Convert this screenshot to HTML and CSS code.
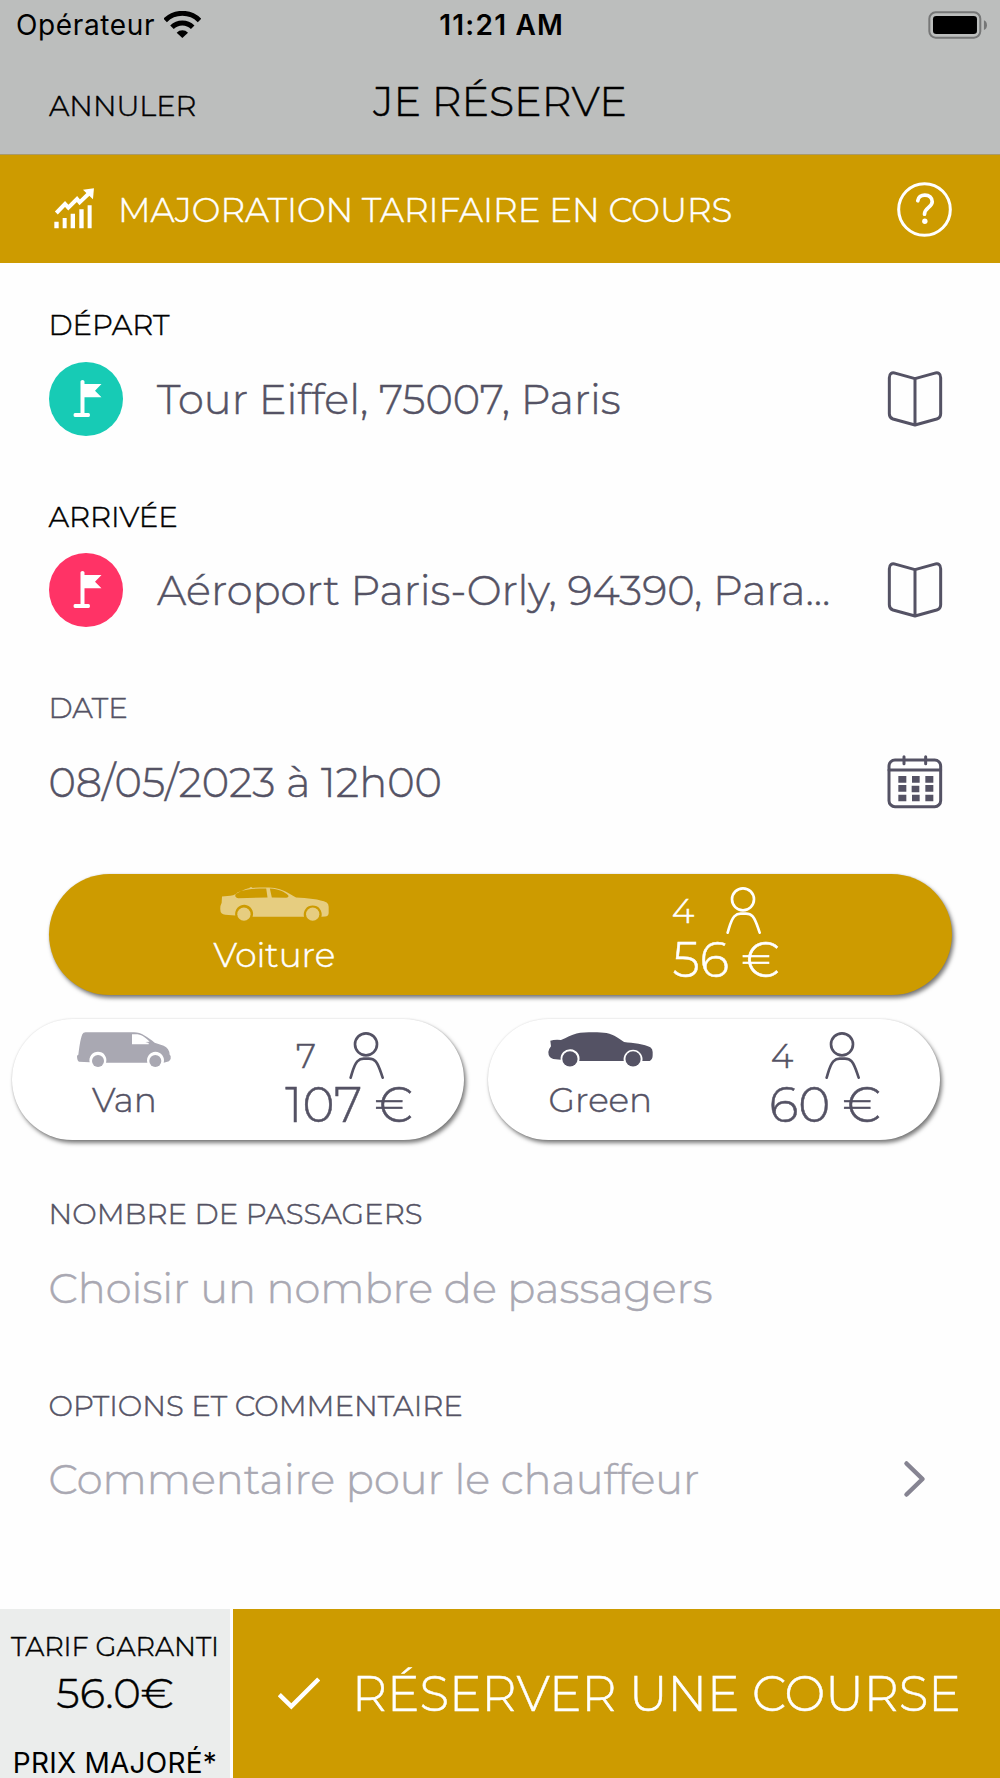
FILE: index.html
```html
<!DOCTYPE html>
<html lang="fr">
<head>
<meta charset="utf-8">
<title>Je réserve</title>
<link rel="stylesheet" href="styles.css">
</head>
<body>
<svg class="defs" aria-hidden="true">
  <symbol id="person" viewBox="678 651 105 141">
    <g fill="none" stroke="currentColor" stroke-width="8" stroke-linecap="round">
      <circle cx="729" cy="688" r="33"/>
      <path d="M683 788C690 765 693 749 703 739Q711 731 722 731H738Q750 731 758 739C768 751 772 768 779 788"/>
    </g>
  </symbol>
  <symbol id="flag" viewBox="0 0 74 74">
    <path fill="#fff" d="M31.5 19.5Q31.5 18 33.5 18T35.500 19.500V22H52.500L46 28.700L52.500 35.300H35.500V51H39.500Q41 51 41 53T39.500 55H26Q24.500 55 24.500 53T26 51H31.500Z"/>
  </symbol>
  <symbol id="map" viewBox="1160 242 168 168">
    <path fill="none" stroke="currentColor" stroke-width="9" stroke-linejoin="round" d="M1244 265L1187 249Q1167 243 1167 262V370Q1167 382 1178 386L1244 404L1309 386Q1321 382 1321 370V262Q1321 243 1301 249L1244 265V404"/>
  </symbol>
</svg>

<main class="screen">
  <header class="header">
    <div class="status">
      <div class="carrier">
        <span>Opérateur</span>
        <svg class="wifi" viewBox="494 30 110 81">
          <g fill="none" stroke="#000" stroke-width="15">
            <path d="M497.400 58.400A73 73 0 0 1 600.600 58.400"/>
            <path d="M517.900 78.900A44 44 0 0 1 580.100 78.900"/>
          </g>
          <path d="M549 111L532 95A24 24 0 0 1 566 95Z"/>
        </svg>
      </div>
      <div class="clock">11:21 AM</div>
      <svg class="battery" viewBox="1284 30 178 84">
        <rect x="1288" y="34" width="153" height="76" rx="19" fill="none" stroke="#767777" stroke-width="6"/>
        <rect x="1299" y="45" width="132" height="54" rx="10"/>
        <path fill="#767777" d="M1452 58Q1461 62 1461 72.500T1452 87Z"/>
      </svg>
    </div>
    <nav class="nav">
      <a class="cancel">ANNULER</a>
      <h1 class="title">JE RÉSERVE</h1>
    </nav>
  </header>

  <section class="banner">
    <svg class="growth" viewBox="163 563 121 122" fill="#fff">
      <path d="M164 664h13v20h-13zM189 653h12v31h-12zM213 640h13v44h-13zM239 627h13v57h-13zM264 615h12v69h-12z"/>
      <path d="M170 638L196 611L206 622L232 596L240 606L270 577" fill="none" stroke="#fff" stroke-width="12"/>
      <path d="M250 568L283 564L280 597Z"/>
    </svg>
    <span class="banner-text">MAJORATION TARIFAIRE EN COURS</span>
    <svg class="help" viewBox="1192 545 164 164" fill="none" stroke="#fff">
      <circle cx="1274" cy="627" r="77" stroke-width="9"/>
      <path stroke-width="11" stroke-linecap="round" d="M1254 601C1255 590 1264 584 1275 584C1288 584 1297 592 1297 604C1297 620 1274 622 1274 641"/>
      <circle cx="1275" cy="662" r="8" fill="#fff" stroke="none"/>
    </svg>
  </section>

  <section class="field">
    <div class="label dark">DÉPART</div>
    <div class="row">
      <svg class="pin pickup"><use href="#flag"/></svg>
      <span class="value">Tour Eiffel, 75007, Paris</span>
      <svg class="action"><use href="#map"/></svg>
    </div>
  </section>
  <section class="field">
    <div class="label dark">ARRIVÉE</div>
    <div class="row">
      <svg class="pin dropoff"><use href="#flag"/></svg>
      <span class="value">Aéroport Paris-Orly, 94390, Para...</span>
      <svg class="action"><use href="#map"/></svg>
    </div>
  </section>
  <section class="field">
    <div class="label">DATE</div>
    <div class="row">
      <span class="value">08/05/2023 à 12h00</span>
      <svg class="action" viewBox="1160 250 168 168">
        <g fill="none" stroke="currentColor" stroke-width="9" stroke-linecap="round">
          <rect x="1166" y="268" width="155" height="140" rx="18"/>
          <path d="M1166 298H1321M1211 258V279M1276 258V279"/>
        </g>
        <path fill="currentColor" d="M1194 316h24v20h-24zM1235 316h23v20h-23zM1275 316h24v20h-24zM1194 343h24v20h-24zM1234 345h23v20h-23zM1275 343h24v20h-24zM1194 372h24v20h-24zM1235 372h23v20h-23zM1275 372h24v20h-24z"/>
      </svg>
    </div>
  </section>

  <section class="vehicles">
    <article class="pill selected">
      <div class="kind">
        <svg class="car" viewBox="29 51 328 101">
          <path fill-rule="evenodd" d="M35 79L60 77C72 75 82 68 92 63C100 58 110 55 119 53L118 51H125L127 53C160 51 188 51 200 55C225 61 240 72 258 82C290 84 330 87 350 97Q356 101 356 110V126Q357 139 345 139L334 140A27 27 0 1 0 282 140H127A27 27 0 1 0 75 136L45 134Q30 132 30 118Q29 108 34 98ZM76 80Q72 72 83 66C110 55 140 55 168 55L172 82L84 84Q78 84 76 80ZM179 55C205 56 225 66 234 75Q238 82 228 83L185 82Z"/>
          <circle cx="101" cy="132" r="20"/><circle cx="308" cy="132" r="20"/>
        </svg>
        <span class="name">Voiture</span>
      </div>
      <div class="offer">
        <div class="seats"><span class="count">4</span><svg class="person"><use href="#person"/></svg></div>
        <span class="price">56 €</span>
      </div>
    </article>
    <div class="pair">
      <article class="pill">
        <div class="kind">
          <svg class="van" viewBox="24 36 282 105">
            <path fill-rule="evenodd" d="M52 37H195C217 37 236 52 257 68L284 77Q301 84 302 104L305 108V117L300 124L284 128A25.500 25.500 0 1 0 235 128H111A25.500 25.500 0 1 0 62 127L30 125Q24 122 24 107L28 104C31 85 33 60 40 43Q43 36 52 37ZM189 43H206C222 46 230 54 242 65L229 66L239 69V73H189Z"/>
            <circle cx="87" cy="123" r="18"/><circle cx="259" cy="123" r="18"/>
          </svg>
          <span class="name">Van</span>
        </div>
        <div class="offer">
          <div class="seats"><span class="count">7</span><svg class="person"><use href="#person"/></svg></div>
          <span class="price">107 €</span>
        </div>
      </article>
      <article class="pill">
        <div class="kind">
          <svg class="green" viewBox="144 96 316 103">
            <path d="M151 121Q165 117 183 119C200 111 215 103 230 99C255 95 300 95 320 98C345 104 358 115 373 125C400 128 435 131 452 141Q459 146 459 155V165Q459 178 450 182H428A28.500 28.500 0 1 0 372 182H238A28.500 28.500 0 1 0 182 178L160 176Q145 172 145 155Q147 145 153 138Z"/>
            <circle cx="210" cy="176" r="23"/><circle cx="400" cy="176" r="23"/>
          </svg>
          <span class="name">Green</span>
        </div>
        <div class="offer">
          <div class="seats"><span class="count">4</span><svg class="person"><use href="#person"/></svg></div>
          <span class="price">60 €</span>
        </div>
      </article>
    </div>
  </section>

  <section class="field">
    <div class="label">NOMBRE DE PASSAGERS</div>
    <div class="row"><span class="value hint">Choisir un nombre de passagers</span></div>
  </section>
  <section class="field">
    <div class="label">OPTIONS ET COMMENTAIRE</div>
    <div class="row">
      <span class="value hint">Commentaire pour le chauffeur</span>
      <svg class="action chevron" viewBox="0 0 56 56"><path fill="none" stroke="currentColor" stroke-width="4.500" stroke-linecap="round" stroke-linejoin="round" d="M19.500 12.500L35.500 28L19.500 43.500"/></svg>
    </div>
  </section>

  <footer class="footer">
    <div class="fare">
      <span class="fare-label">TARIF GARANTI</span>
      <span class="fare-price">56.0€</span>
      <span class="fare-note">PRIX MAJORÉ*</span>
    </div>
    <button class="book">
      <svg class="check" viewBox="835 923 126 98"><path fill="none" stroke="#fff" stroke-width="13" d="M839 976L875 1011L957 929"/></svg>
      <span class="book-text">RÉSERVER UNE COURSE</span>
    </button>
  </footer>
</main>
</body>
</html>
```
FILE: styles.css
```css
* { box-sizing: border-box; }

body {
  margin: 0;
  background: #fefefe;
  color: #545264;
  font-family: Montserrat, Inter, sans-serif;
  font-weight: 300;
  -webkit-text-stroke: 0.5px currentColor;
}

svg { flex: none; display: block; }
.defs { display: none; }

.screen {
  width: 1000px;
  height: 1778px;
  display: flex;
  flex-direction: column;
  overflow: hidden;
}

/* Header */
.header { height: 155px; background: #bcbebd; color: #000; border-bottom: 1px solid #a89a6c; }

.status {
  height: 51px;
  display: grid;
  grid-template-columns: 1fr auto 1fr;
  align-items: center;
  padding: 0 12.7px 0 16px;
  font: 400 28px/51px Inter, sans-serif;
  -webkit-text-stroke: 0;
}
.carrier { display: flex; align-items: center; gap: 9px; letter-spacing: 0.64px; }
.wifi { width: 36.700px; height: 27px; margin-top: -3px; }
.clock { font-weight: 600; letter-spacing: 1.2px; }
.battery { width: 59.300px; height: 28px; justify-self: end; margin-top: -2px; }

.nav {
  height: 103px;
  display: grid;
  grid-template-columns: 1fr auto 1fr;
  align-items: center;
  padding: 0 49px;
}
.cancel { font-size: 28.900px; line-height: 34px; padding-top: 6px; }
.title { margin: 0; font-size: 41.250px; font-weight: 300; line-height: 50px; padding-bottom: 3px; }

/* Surcharge banner */
.banner {
  height: 108px;
  display: flex;
  align-items: center;
  padding: 0 48px 0 54px;
  background: #cd9b00;
  color: #fff;
}
.growth { width: 40.300px; height: 40.700px; margin-top: -1px; }
.banner-text { flex: 1; margin-left: 23.700px; padding-top: 1px; font-size: 34.100px; line-height: 40px; }
.help { width: 55px; height: 55px; }

/* Form fields */
.field { height: 191.700px; padding: 47px 57px 0 48.500px; }
.label { font-size: 29.180px; line-height: 30px; }
.label.dark { color: #000; }
.row { height: 74px; margin-top: 21.500px; display: flex; align-items: center; }
.pin { width: 74px; height: 74px; margin-right: 34.500px; border-radius: 50%; }
.pickup { background: #17cbb5; }
.dropoff { background: #ff3366; }
.value { flex: 1; font-size: 41.560px; line-height: 50px; white-space: nowrap; }
.hint { color: #a9a8b2; }
.action { width: 56px; height: 56px; }
.chevron { color: #868492; }

/* Vehicle choice */
.vehicles { padding: 36px 0 12px; }
.pill {
  height: 121px;
  display: flex;
  border-radius: 61px;
  background: #fff;
  box-shadow: 2px 3px 4px rgba(0, 0, 0, 0.52), 0 0 2px rgba(0, 0, 0, 0.12);
}
.selected { margin: 0 48px 0 48.500px; background: #cd9b00; color: #fff; }
.pair { display: grid; grid-template-columns: 1fr 1fr; gap: 24px; padding: 0 60px 0 12px; margin-top: 24px; }
.pair .offer { padding-right: 2.500px; }
.kind, .offer { flex: 1; display: flex; flex-direction: column; align-items: center; padding-top: 13px; }
.car { width: 109px; height: 34px; fill: #e6cd80; }
.van { width: 94px; height: 35px; fill: #a9a8b2; }
.green { width: 105px; height: 35px; fill: #545264; }
.name { margin-top: auto; margin-bottom: 20.300px; font-size: 34.300px; line-height: 40px; }
.seats { height: 47px; display: flex; align-items: center; padding-right: 20px; }
.count { width: 24px; margin-right: 31px; font-size: 34.500px; line-height: 40px; text-align: center; }
.person { width: 35px; height: 47px; }
.price { font-size: 48.600px; line-height: 51px; }

/* Footer */
.footer { flex: none; height: 169px; margin-top: auto; display: flex; gap: 3px; }
.fare {
  width: 230px;
  display: flex;
  flex-direction: column;
  align-items: center;
  padding-top: 22px;
  background: #ebedec;
  color: #000;
}
.fare-label { font-size: 27px; line-height: 32px; }
.fare-price { margin-top: 7px; font-size: 41.800px; line-height: 46px; }
.fare-note { margin-top: auto; font: 400 28px/30px Inter, sans-serif; letter-spacing: 0.25px; -webkit-text-stroke: 0; }
.book {
  flex: 1;
  display: flex;
  align-items: center;
  gap: 32px;
  padding: 0 0 0 45px;
  border: 0;
  background: #cd9b00;
  color: #fff;
  font: inherit;
  font-size: 48.550px;
  line-height: 60px;
  white-space: nowrap;
}
.book-text { padding-top: 1px; }
.check { width: 42px; height: 32.700px; }
```
